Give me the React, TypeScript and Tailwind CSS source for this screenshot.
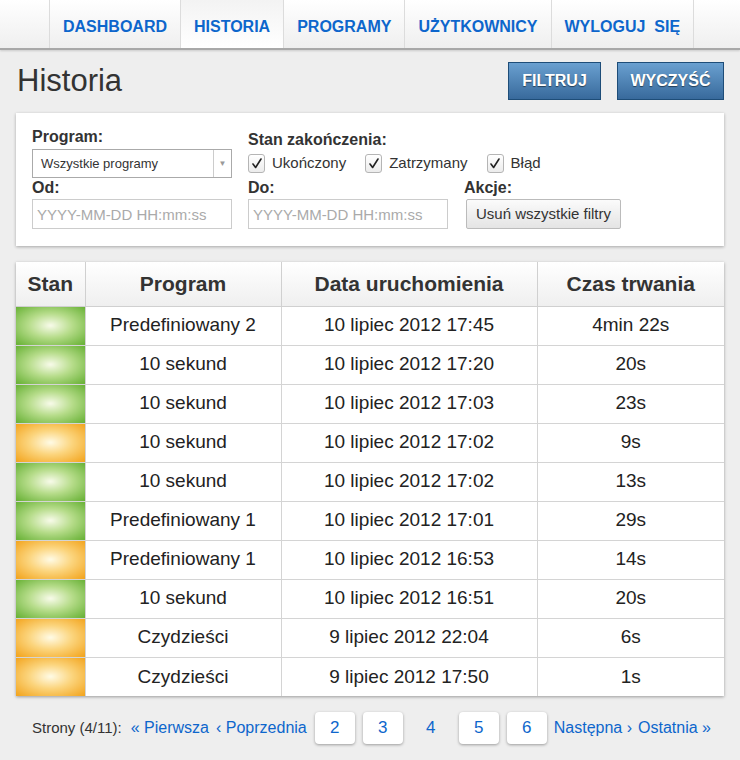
import React from "react";

const NAV = [
  { label: "DASHBOARD", active: false },
  { label: "HISTORIA", active: true },
  { label: "PROGRAMY", active: false },
  { label: "UŻYTKOWNICY", active: false },
  { label: "WYLOGUJ\u00a0 SIĘ", active: false },
];

type Row = { ok: boolean; program: string; date: string; time: string };

const ROWS: Row[] = [
  { ok: true, program: "Predefiniowany 2", date: "10 lipiec 2012 17:45", time: "4min 22s" },
  { ok: true, program: "10 sekund", date: "10 lipiec 2012 17:20", time: "20s" },
  { ok: true, program: "10 sekund", date: "10 lipiec 2012 17:03", time: "23s" },
  { ok: false, program: "10 sekund", date: "10 lipiec 2012 17:02", time: "9s" },
  { ok: true, program: "10 sekund", date: "10 lipiec 2012 17:02", time: "13s" },
  { ok: true, program: "Predefiniowany 1", date: "10 lipiec 2012 17:01", time: "29s" },
  { ok: false, program: "Predefiniowany 1", date: "10 lipiec 2012 16:53", time: "14s" },
  { ok: true, program: "10 sekund", date: "10 lipiec 2012 16:51", time: "20s" },
  { ok: false, program: "Czydzieści", date: "9 lipiec 2012 22:04", time: "6s" },
  { ok: false, program: "Czydzieści", date: "9 lipiec 2012 17:50", time: "1s" },
];

function Check({ label }: { label: string }) {
  return (
    <label className="flex items-center gap-[7px] text-[15px] text-[#333]">
      <span className="flex h-[19px] w-[17px] items-center justify-center rounded-[3px] border border-[#b5b5b5] bg-gradient-to-b from-white to-[#ececec]">
        <svg viewBox="0 0 12 12" className="h-[13px] w-[12px]">
          <path d="M2 6.5 L4.6 10 L10 1.5" fill="none" stroke="#222" strokeWidth="1.6" strokeLinecap="round" strokeLinejoin="round" />
        </svg>
      </span>
      {label}
    </label>
  );
}

function PageBox({ n }: { n: number }) {
  return (
    <span className="flex h-[32px] w-[40px] items-center justify-center rounded-[4px] bg-white text-[17px] text-[#0d66cc] shadow-[0_1px_3px_rgba(0,0,0,0.35)]">
      {n}
    </span>
  );
}

export default function App() {
  return (
    <div className="min-h-[760px] bg-[#eeeeee] font-['Liberation_Sans',Arial,sans-serif] text-[#333]">
      {/* Top navigation */}
      <div className="h-[50px] border-b-2 border-[#a8a8a8] bg-gradient-to-b from-white to-[#efefef] shadow-[0_1px_2px_rgba(0,0,0,0.15)]">
        <div className="flex h-full pl-[49px]">
          {NAV.map((item, i) => (
            <div
              key={i}
              className={`flex h-full items-center border-l border-[#dcdcdc] px-[13px] pt-[6px] text-[16px] font-bold text-[#0d66cc] ${i === NAV.length - 1 ? "border-r" : ""} ${item.active ? "bg-gradient-to-b from-[#f3f3f3] to-white" : ""}`}
            >
              {item.label}
            </div>
          ))}
        </div>
      </div>

      {/* Title row */}
      <div className="flex items-center justify-between px-[16px] pt-[12px]">
        <h1 className="pl-[1px] text-[31px] font-normal leading-[38px] text-[#333]">Historia</h1>
        <div className="flex gap-[16px]">
          <button className="h-[38px] w-[93px] border border-[#1e4d78] bg-gradient-to-b from-[#6aa0d0] to-[#386a9c] text-[16px] font-bold text-white [text-shadow:0_1px_1px_rgba(0,0,0,0.5)]">
            FILTRUJ
          </button>
          <button className="h-[38px] w-[107px] border border-[#1e4d78] bg-gradient-to-b from-[#6aa0d0] to-[#386a9c] text-[16px] font-bold text-white [text-shadow:0_1px_1px_rgba(0,0,0,0.5)]">
            WYCZYŚĆ
          </button>
        </div>
      </div>

      {/* Filters */}
      <div className="mx-[16px] mt-[13px] h-[133px] bg-white px-[16px] pt-[14px] shadow-[0_1px_3px_rgba(0,0,0,0.3)]">
        <div className="flex gap-[16px]">
          <div className="w-[200px]">
            <div className="text-[16px] font-bold leading-[20px]">Program:</div>
            <div className="mt-[2px] flex h-[29px] items-center border border-[#aaa] bg-white">
              <span className="flex-1 pl-[8px] text-[13px] text-[#333]">Wszystkie programy</span>
              <span className="flex h-full w-[18px] items-center justify-center border-l border-[#ccc] text-[8px] text-[#999]">▼</span>
            </div>
          </div>
          <div>
            <div className="pt-[3px] text-[16px] font-bold leading-[20px]">Stan zakończenia:</div>
            <div className="mt-[2px] flex items-center gap-[19px]">
              <Check label="Ukończony" />
              <Check label="Zatrzymany" />
              <Check label="Błąd" />
            </div>
          </div>
        </div>
        <div className="flex gap-[16px]">
          <div className="w-[200px]">
            <div className="text-[16px] font-bold leading-[20px]">Od:</div>
            <input
              placeholder="YYYY-MM-DD HH:mm:ss"
              className="mt-[1px] h-[30px] w-[200px] border border-[#ccc] px-[4px] text-[15px] placeholder:text-[#aaa] outline-none"
            />
          </div>
          <div className="w-[200px]">
            <div className="text-[16px] font-bold leading-[20px]">Do:</div>
            <input
              placeholder="YYYY-MM-DD HH:mm:ss"
              className="mt-[1px] h-[30px] w-[200px] border border-[#ccc] px-[4px] text-[15px] placeholder:text-[#aaa] outline-none"
            />
          </div>
          <div>
            <div className="text-[16px] font-bold leading-[20px]">Akcje:</div>
            <button className="ml-[2px] mt-[1px] h-[30px] rounded-[2px] border border-[#bbb] bg-gradient-to-b from-[#fbfbfb] to-[#e4e4e4] px-[9px] text-[15px] text-[#333]">
              Usuń wszystkie filtry
            </button>
          </div>
        </div>
      </div>

      {/* Table */}
      <div className="mx-[16px] mt-[16px] bg-white shadow-[0_1px_3px_rgba(0,0,0,0.35)]">
        <table className="w-full table-fixed border-collapse">
          <colgroup>
            <col className="w-[69px]" />
            <col className="w-[196px]" />
            <col className="w-[256px]" />
            <col className="w-[187px]" />
          </colgroup>
          <thead>
            <tr className="h-[44px] bg-gradient-to-b from-white to-[#efefef]">
              {["Stan", "Program", "Data uruchomienia", "Czas trwania"].map((h, i) => (
                <th
                  key={h}
                  className={`border-b border-[#d0d0d0] text-center text-[21px] font-bold text-[#333] ${i > 0 ? "border-l" : ""}`}
                >
                  {h}
                </th>
              ))}
            </tr>
          </thead>
          <tbody>
            {ROWS.map((r, i) => (
              <tr key={i} className="h-[39px] text-[19px] text-[#222]">
                <td
                  className={`border-t border-[#d4d4d4] ${r.ok ? "bg-[radial-gradient(ellipse_at_center,#f8fbea_0%,#b6dc8a_45%,#66b034_100%)]" : "bg-[radial-gradient(ellipse_at_center,#fffbe6_0%,#fbd47c_45%,#f2a31c_100%)]"} ${i === 0 ? "border-t-0" : ""}`}
                />
                <td className={`border-l border-t border-[#d4d4d4] text-center ${i === 0 ? "border-t-0" : ""}`}>{r.program}</td>
                <td className={`border-l border-t border-[#d4d4d4] text-center ${i === 0 ? "border-t-0" : ""}`}>{r.date}</td>
                <td className={`border-l border-t border-[#d4d4d4] text-center ${i === 0 ? "border-t-0" : ""}`}>{r.time}</td>
              </tr>
            ))}
          </tbody>
        </table>
      </div>

      {/* Pagination */}
      <div className="flex items-center pl-[32px] pt-[16px] text-[15px]">
        <span className="text-[#333]">Strony (4/11):</span>
        <span className="ml-[9px] text-[16px] text-[#0d66cc]">« Pierwsza</span>
        <span className="ml-[7px] text-[16px] text-[#0d66cc]">‹ Poprzednia</span>
        <div className="ml-[8px] flex gap-[8px]">
          <PageBox n={2} />
          <PageBox n={3} />
          <span className="flex h-[32px] w-[40px] items-center justify-center text-[17px] text-[#0d66cc]">4</span>
          <PageBox n={5} />
          <PageBox n={6} />
        </div>
        <span className="ml-[7px] text-[16px] text-[#0d66cc]">Następna ›</span>
        <span className="ml-[6px] text-[16px] text-[#0d66cc]">Ostatnia »</span>
      </div>
    </div>
  );
}
